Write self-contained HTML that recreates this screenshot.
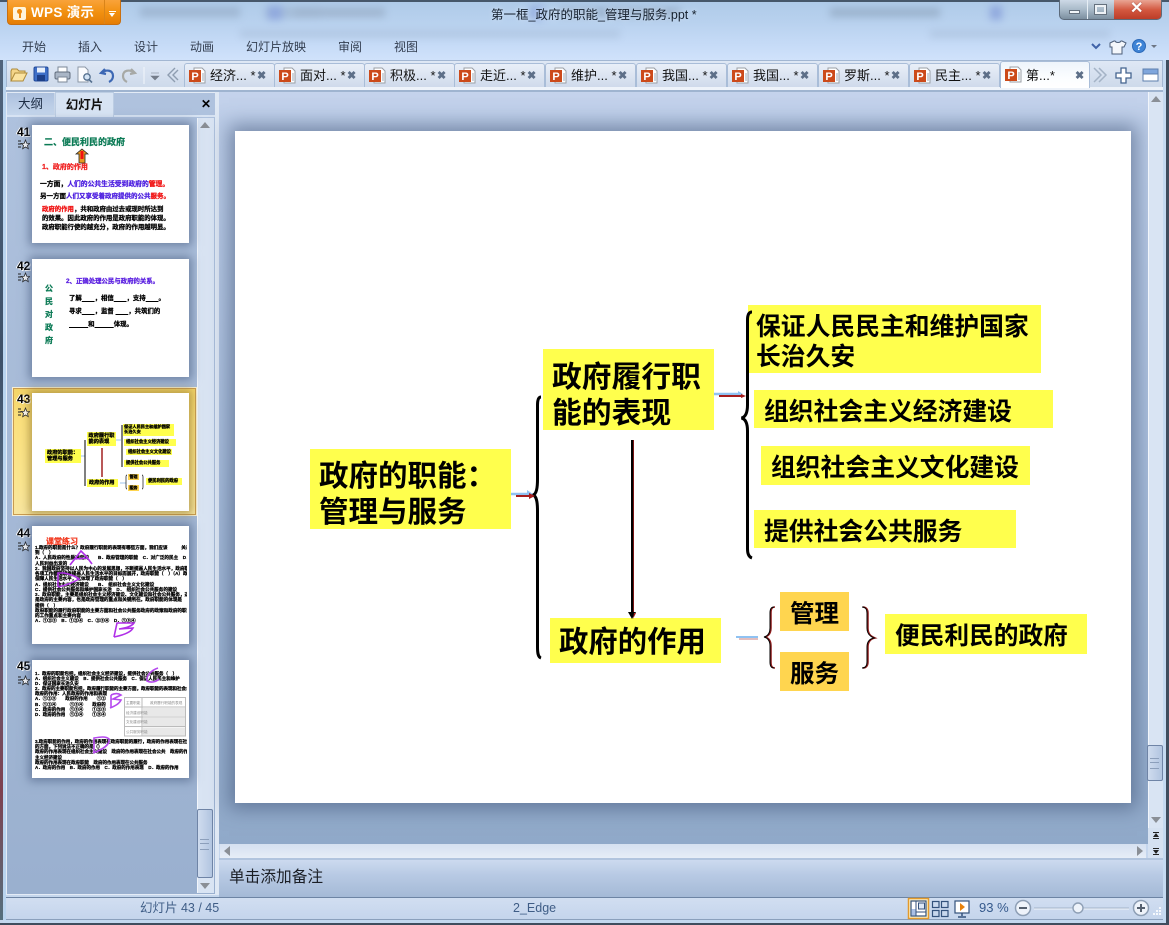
<!DOCTYPE html>
<html lang="zh"><head><meta charset="utf-8"><title>第一框_政府的职能_管理与服务.ppt</title>
<style>
html,body{margin:0;padding:0;width:1169px;height:925px;overflow:hidden;background:#b9cfe9}
body{position:relative;font-family:"Liberation Sans","Noto Sans CJK SC",sans-serif;color:#111}
div,span,svg{position:absolute;display:block}
.m{top:39px;font-size:12px;line-height:16px;color:#333e50;white-space:nowrap}
.tab{top:63px;width:91px;height:24px;background:linear-gradient(#e9eff8,#cfdaeb);border:1px solid #a9bdd8;border-bottom:0;box-sizing:border-box;border-radius:3px 3px 0 0}
.tab .t{left:25px;top:4px;font-size:13px;line-height:16px;color:#111;white-space:nowrap}
.tab .x{left:72px;top:5px;font-size:11px;line-height:14px;color:#5d6f88;font-weight:bold}
.tab svg{left:4px;top:3px}
.b{background:#ffff4d;font-weight:bold;white-space:nowrap;color:#000;font-family:"Noto Sans CJK SC","Liberation Sans",sans-serif}
.th{left:32px;width:157px;height:118px;background:#fff;box-shadow:0 0 9px 3px rgba(70,90,125,.6);overflow:hidden}
.n{left:17px;font-size:12px;font-weight:bold;line-height:12px;color:#000;text-shadow:1px 1px 0 #fff,-1px 0 0 #fff}
.st{left:18px}
.l{position:absolute;white-space:nowrap;font-weight:bold;font-size:5.2px;line-height:7px;color:#000;-webkit-text-stroke:.25px currentColor;overflow:hidden;max-width:152px}
</style></head><body>

<!-- window glass -->
<div style="left:0;top:0;width:1169px;height:925px;background:linear-gradient(#aecaE8 0,#b8d1ee 22px,#c6dbf7 45px,#d0e2fb 60px,#c4d5ec 100%)"></div>
<div style="left:0;top:0;width:1169px;height:2px;background:#46576a"></div>
<div style="left:130px;top:4px;width:930px;height:20px;filter:blur(4px);opacity:.4;overflow:hidden">
  <div style="left:10px;top:3px;width:100px;height:10px;background:#7f93ad"></div>
  <div style="left:135px;top:3px;width:55px;height:11px;background:#8da2bb"></div>
  <div style="left:138px;top:2px;width:14px;height:14px;background:#5a70c8"></div>
  <div style="left:165px;top:4px;width:90px;height:9px;background:#7f8fa5"></div>
  <div style="left:400px;top:2px;width:14px;height:14px;background:#6a80d0"></div>
  <div style="left:430px;top:4px;width:120px;height:9px;background:#75889f"></div>
  <div style="left:700px;top:4px;width:110px;height:9px;background:#75889f"></div>
  <div style="left:860px;top:2px;width:12px;height:14px;background:#5a70c8"></div>
</div>
<div style="left:240px;top:29px;width:880px;height:12px;filter:blur(4px);opacity:.16;overflow:hidden">
  <div style="left:0;top:1px;width:380px;height:8px;background:#6d8099"></div>
  <div style="left:690px;top:1px;width:180px;height:8px;background:#6d8099"></div>
</div>

<!-- WPS button -->
<div style="left:7px;top:0;width:114px;height:25px;background:linear-gradient(#f9a33a,#f29111 50%,#e57d05);border:1px solid #c96f10;border-top:0;box-sizing:border-box;border-radius:0 0 4px 4px"></div>
<div style="left:104px;top:0;width:1px;height:24px;background:#d98419"></div>
<div style="left:13px;top:7px;width:13px;height:13px;background:#fff4dc;border-radius:2px"></div>
<div style="left:17px;top:9px;width:5px;height:5px;border-radius:50%;background:#ee8b10"></div>
<div style="left:19px;top:13px;width:2px;height:5px;background:#ee8b10"></div>
<div style="left:31px;top:4px;font-size:13.500px;line-height:18px;color:#fff;font-weight:bold;white-space:nowrap;letter-spacing:.3px">WPS 演示</div>
<div style="left:109px;top:11px;width:7px;height:1px;background:#fff"></div>
<div style="left:109px;top:13px;width:0;height:0;border:3.5px solid transparent;border-top:4px solid #fff;border-bottom:0"></div>

<div style="left:491px;top:7px;font-size:12.5px;line-height:17px;color:#15202e;white-space:nowrap;text-shadow:0 0 5px #dbe8f8">第一框_政府的职能_管理与服务.ppt *</div>

<!-- window buttons -->
<div style="left:1059px;top:0;width:103px;height:20px;border:1px solid #5c6a7a;border-top:0;box-sizing:border-box;border-radius:0 0 5px 5px;background:linear-gradient(#cdd9e6,#a9bac9 50%,#7c8f9f);overflow:hidden">
  <div style="left:27px;top:0;width:1px;height:20px;background:#e6eef5"></div>
  <div style="left:54px;top:0;width:48px;height:20px;background:linear-gradient(#e9a594,#d3573f 50%,#b93a25)"></div>
  <div style="left:9px;top:10px;width:11px;height:4px;background:#f2f5f8;border:1px solid #65717e;box-sizing:border-box"></div>
  <div style="left:35px;top:5px;width:11px;height:9px;background:transparent;border:2px solid #eef2f6;outline:1px solid #65717e;box-sizing:border-box"></div>
  <div style="left:70px;top:0;font-size:16px;line-height:18px;font-weight:bold;color:#fff;text-shadow:0 0 1px #722">✕</div>
</div>

<!-- menu -->
<div class="m" style="left:22px">开始</div>
<div class="m" style="left:78px">插入</div>
<div class="m" style="left:134px">设计</div>
<div class="m" style="left:190px">动画</div>
<div class="m" style="left:246px">幻灯片放映</div>
<div class="m" style="left:338px">审阅</div>
<div class="m" style="left:394px">视图</div>

<svg style="left:1088px;top:38px" width="80" height="18" viewBox="0 0 80 18">
  <path d="M4 6l4 4 4-4" fill="none" stroke="#3f62a8" stroke-width="2"/>
  <path d="M22 5l4-2h1c1 2 5 2 6 0h1l4 2-2 4h-2v7H24V9h-2z" fill="#f4f7fb" stroke="#4b5d78"/>
  <circle cx="51" cy="8" r="6.5" fill="#3f84d6" stroke="#2b69b8"/>
  <text x="51" y="12" font-size="11" font-weight="bold" text-anchor="middle" fill="#fff">?</text>
  <path d="M63 7h6l-3 3z" fill="#6d7684"/>
</svg>

<!-- toolbar -->
<div style="left:6px;top:60px;width:1157px;height:28px;background:linear-gradient(#dfe8f5,#cdd9ea);border:1px solid #a3b7d2;border-bottom:0;box-sizing:border-box"></div>
<div style="left:6px;top:87px;width:1157px;height:3px;background:#eef3fa"></div>
<div style="left:6px;top:90px;width:1157px;height:2px;background:#9fb4d0"></div>

<svg style="left:9px;top:65px" width="170" height="20" viewBox="0 0 170 20">
  <path d="M2 16V6l1-2h5l2 2h6v3" fill="#f4d589" stroke="#ad8a3a"/>
  <path d="M2 16l4-8h12l-4 8z" fill="#fbe3a0" stroke="#ad8a3a"/>
  <rect x="25" y="2" width="14" height="14" rx="1.5" fill="#3e6fc8" stroke="#224a99"/>
  <rect x="28" y="2.5" width="8" height="5" fill="#e8f0fb"/><rect x="28" y="10" width="8" height="6" fill="#1d3f88"/>
  <rect x="49" y="2" width="9" height="5" fill="#fff" stroke="#7b8797"/>
  <rect x="46" y="7" width="15" height="7" rx="1.5" fill="#aab6c6" stroke="#616d7d"/>
  <rect x="49" y="12" width="9" height="5" fill="#fff" stroke="#7b8797"/>
  <path d="M69 2h7l3 3v12H69z" fill="#fbfcfe" stroke="#8c97a6"/>
  <circle cx="78" cy="12" r="3.2" fill="#d4e4f5" stroke="#55708f" stroke-width="1.3"/>
  <path d="M80 14.5l3 3" stroke="#55708f" stroke-width="1.6"/>
  <path d="M96 4l-4 4 5 1M93 8c4-4 11-3 11 3 0 3-2 5-4 6" fill="none" stroke="#3d68b4" stroke-width="2.2"/>
  <path d="M122 4l4 4-5 1M125 8c-4-4-11-3-11 3 0 3 2 5 4 6" fill="none" stroke="#a7a9a6" stroke-width="2.2"/>
  <path d="M135 2v17" stroke="#f2f6fb"/>
  <path d="M142 8h8M142 11h8l-4 4z" fill="#747d8a" stroke="#747d8a" stroke-width=".6"/>
  <path d="M166 3l-7 7 7 7M169 5l-5 5 5 5" fill="none" stroke="#8e9db0" stroke-width="1.4"/>
</svg>

<!-- doc tabs -->
<div class="tab" style="left:184px"><svg width="17" height="17" viewBox="0 0 17 17"><path d="M5 1h8l3 3v12H5z" fill="#fff" stroke="#9a9fa6"/><path d="M13 7h2M13 9h2M13 11h2M13 13h2" stroke="#9ba8b8"/><rect x="0" y="3" width="12" height="12" fill="#cc4a1a"/><text x="6" y="13" font-size="11" font-weight="bold" text-anchor="middle" fill="#fff">P</text></svg><span class="t">经济... *</span><span class="x">✖</span></div>
<div class="tab" style="left:274px"><svg width="17" height="17" viewBox="0 0 17 17"><path d="M5 1h8l3 3v12H5z" fill="#fff" stroke="#9a9fa6"/><path d="M13 7h2M13 9h2M13 11h2M13 13h2" stroke="#9ba8b8"/><rect x="0" y="3" width="12" height="12" fill="#cc4a1a"/><text x="6" y="13" font-size="11" font-weight="bold" text-anchor="middle" fill="#fff">P</text></svg><span class="t">面对... *</span><span class="x">✖</span></div>
<div class="tab" style="left:364px"><svg width="17" height="17" viewBox="0 0 17 17"><path d="M5 1h8l3 3v12H5z" fill="#fff" stroke="#9a9fa6"/><path d="M13 7h2M13 9h2M13 11h2M13 13h2" stroke="#9ba8b8"/><rect x="0" y="3" width="12" height="12" fill="#cc4a1a"/><text x="6" y="13" font-size="11" font-weight="bold" text-anchor="middle" fill="#fff">P</text></svg><span class="t">积极... *</span><span class="x">✖</span></div>
<div class="tab" style="left:454px"><svg width="17" height="17" viewBox="0 0 17 17"><path d="M5 1h8l3 3v12H5z" fill="#fff" stroke="#9a9fa6"/><path d="M13 7h2M13 9h2M13 11h2M13 13h2" stroke="#9ba8b8"/><rect x="0" y="3" width="12" height="12" fill="#cc4a1a"/><text x="6" y="13" font-size="11" font-weight="bold" text-anchor="middle" fill="#fff">P</text></svg><span class="t">走近... *</span><span class="x">✖</span></div>
<div class="tab" style="left:545px"><svg width="17" height="17" viewBox="0 0 17 17"><path d="M5 1h8l3 3v12H5z" fill="#fff" stroke="#9a9fa6"/><path d="M13 7h2M13 9h2M13 11h2M13 13h2" stroke="#9ba8b8"/><rect x="0" y="3" width="12" height="12" fill="#cc4a1a"/><text x="6" y="13" font-size="11" font-weight="bold" text-anchor="middle" fill="#fff">P</text></svg><span class="t">维护... *</span><span class="x">✖</span></div>
<div class="tab" style="left:636px"><svg width="17" height="17" viewBox="0 0 17 17"><path d="M5 1h8l3 3v12H5z" fill="#fff" stroke="#9a9fa6"/><path d="M13 7h2M13 9h2M13 11h2M13 13h2" stroke="#9ba8b8"/><rect x="0" y="3" width="12" height="12" fill="#cc4a1a"/><text x="6" y="13" font-size="11" font-weight="bold" text-anchor="middle" fill="#fff">P</text></svg><span class="t">我国... *</span><span class="x">✖</span></div>
<div class="tab" style="left:727px"><svg width="17" height="17" viewBox="0 0 17 17"><path d="M5 1h8l3 3v12H5z" fill="#fff" stroke="#9a9fa6"/><path d="M13 7h2M13 9h2M13 11h2M13 13h2" stroke="#9ba8b8"/><rect x="0" y="3" width="12" height="12" fill="#cc4a1a"/><text x="6" y="13" font-size="11" font-weight="bold" text-anchor="middle" fill="#fff">P</text></svg><span class="t">我国... *</span><span class="x">✖</span></div>
<div class="tab" style="left:818px"><svg width="17" height="17" viewBox="0 0 17 17"><path d="M5 1h8l3 3v12H5z" fill="#fff" stroke="#9a9fa6"/><path d="M13 7h2M13 9h2M13 11h2M13 13h2" stroke="#9ba8b8"/><rect x="0" y="3" width="12" height="12" fill="#cc4a1a"/><text x="6" y="13" font-size="11" font-weight="bold" text-anchor="middle" fill="#fff">P</text></svg><span class="t">罗斯... *</span><span class="x">✖</span></div>
<div class="tab" style="left:909px"><svg width="17" height="17" viewBox="0 0 17 17"><path d="M5 1h8l3 3v12H5z" fill="#fff" stroke="#9a9fa6"/><path d="M13 7h2M13 9h2M13 11h2M13 13h2" stroke="#9ba8b8"/><rect x="0" y="3" width="12" height="12" fill="#cc4a1a"/><text x="6" y="13" font-size="11" font-weight="bold" text-anchor="middle" fill="#fff">P</text></svg><span class="t">民主... *</span><span class="x">✖</span></div>
<div class="tab" style="left:1000px;top:61px;height:27px;width:90px;background:linear-gradient(#eef4fb,#fbfdff 60%,#fff);z-index:2"><svg style="top:4px" width="17" height="17" viewBox="0 0 17 17"><path d="M5 1h8l3 3v12H5z" fill="#fff" stroke="#9a9fa6"/><path d="M13 7h2M13 9h2M13 11h2M13 13h2" stroke="#9ba8b8"/><rect x="0" y="3" width="12" height="12" fill="#cc4a1a"/><text x="6" y="13" font-size="11" font-weight="bold" text-anchor="middle" fill="#fff">P</text></svg><span class="t" style="top:6px;left:25px">第...*</span><span class="x" style="top:7px;left:74px">✖</span></div>

<svg style="left:1092px;top:65px" width="70" height="20" viewBox="0 0 70 20">
  <path d="M2 3l7 7-7 7M7 3l7 7-7 7" fill="none" stroke="#a4b3c6" stroke-width="1.5"/>
  <path d="M29 3h5v5h5v5h-5v5h-5v-5h-5V8h5z" fill="#fff" stroke="#44648f" stroke-width="1.3"/>
  <rect x="51" y="4" width="15" height="5" fill="#7fa6dc" stroke="#5d7fae"/><rect x="51" y="9" width="15" height="7" fill="#fff" stroke="#5d7fae"/>
</svg>

<!-- left frame strip (desktop behind) -->
<div style="left:0;top:60px;width:3px;height:860px;background:linear-gradient(#50647c,#3e5169 35%,#5a6f8a 55%,#6a5a70 70%,#7e4150 85%,#55707e)"></div>
<div style="left:3px;top:60px;width:3px;height:860px;background:#b9d4ef"></div>

<!-- left panel -->
<div style="left:6px;top:92px;width:210px;height:803px;background:linear-gradient(#afc2de,#a5b9d6 50%,#9ab0cf);border:1px solid #e3ebf6;box-sizing:border-box"></div>
<div style="left:7px;top:93px;width:48px;height:22px;background:linear-gradient(#adc1de,#c5d6ec);border-right:1px solid #c9d6e8;box-sizing:border-box;font-size:12.5px;line-height:22px;text-align:center;color:#1c2c44">大纲</div>
<div style="left:55px;top:92px;width:59px;height:25px;background:#d7e3f3;border:1px solid #bccde3;border-bottom:0;box-sizing:border-box;font-size:12.5px;line-height:24px;text-align:center;color:#111;font-weight:bold">幻灯片</div>
<div style="left:7px;top:115px;width:48px;height:2px;background:#d7e3f3"></div>
<div style="left:114px;top:115px;width:101px;height:2px;background:#d7e3f3"></div>
<div style="left:201px;top:96px;font-size:12px;line-height:16px;font-weight:bold;color:#000">✕</div>

<!-- left scrollbar -->
<div style="left:197px;top:118px;width:17px;height:775px;background:#d9e4f3;border-left:1px solid #f1f5fb;box-sizing:border-box"></div>
<div style="left:200px;top:122px;width:0;height:0;border:5px solid transparent;border-bottom:6px solid #8a8f96;border-top:0"></div>
<div style="left:197px;top:809px;width:16px;height:69px;background:linear-gradient(90deg,#cfdcef,#b2c5e0);border:1px solid #6f84a6;box-sizing:border-box;border-radius:2px"></div>
<div style="left:200px;top:839px;width:9px;height:9px;border-top:1px solid #8c9fbb;border-bottom:1px solid #8c9fbb"></div>
<div style="left:200px;top:843px;width:9px;height:1px;background:#8c9fbb"></div>
<div style="left:200px;top:883px;width:0;height:0;border:5px solid transparent;border-top:6px solid #8a8f96;border-bottom:0"></div>

<!-- selected thumb highlight -->
<div style="left:13px;top:388px;width:183px;height:127px;background:linear-gradient(#f4d568,#fbe07d 25%,#fbe690 75%,#f8e6a0);border:1px solid #c99b50;outline:1px solid #f6efd2;box-sizing:border-box"></div>

<div class="n" style="top:126px">41</div>
<svg class="st" style="top:139px" width="12" height="12" viewBox="0 0 12 12"><path d="M0 2h3M0 5h3M0 8h3" stroke="#222"/><path d="M7.500 1l1.300 3.300 3 .2-2.300 2 .8 3.200-2.800-1.700-2.800 1.700.8-3.200-2.300-2 3-.2z" fill="#fff" stroke="#222" stroke-width=".8"/></svg>
<div class="n" style="top:260px">42</div>
<svg class="st" style="top:272px" width="12" height="12" viewBox="0 0 12 12"><path d="M0 2h3M0 5h3M0 8h3" stroke="#222"/><path d="M7.500 1l1.300 3.300 3 .2-2.300 2 .8 3.200-2.800-1.700-2.800 1.700.8-3.200-2.300-2 3-.2z" fill="#fff" stroke="#222" stroke-width=".8"/></svg>
<div class="n" style="top:393px">43</div>
<svg class="st" style="top:407px" width="12" height="12" viewBox="0 0 12 12"><path d="M0 2h3M0 5h3M0 8h3" stroke="#222"/><path d="M7.500 1l1.300 3.300 3 .2-2.300 2 .8 3.200-2.800-1.700-2.800 1.700.8-3.200-2.300-2 3-.2z" fill="#fff" stroke="#222" stroke-width=".8"/></svg>
<div class="n" style="top:527px">44</div>
<svg class="st" style="top:541px" width="12" height="12" viewBox="0 0 12 12"><path d="M0 2h3M0 5h3M0 8h3" stroke="#222"/><path d="M7.500 1l1.300 3.300 3 .2-2.300 2 .8 3.200-2.800-1.700-2.800 1.700.8-3.200-2.300-2 3-.2z" fill="#fff" stroke="#222" stroke-width=".8"/></svg>
<div class="n" style="top:660px">45</div>
<svg class="st" style="top:675px" width="12" height="12" viewBox="0 0 12 12"><path d="M0 2h3M0 5h3M0 8h3" stroke="#222"/><path d="M7.500 1l1.300 3.300 3 .2-2.300 2 .8 3.200-2.800-1.700-2.800 1.700.8-3.200-2.300-2 3-.2z" fill="#fff" stroke="#222" stroke-width=".8"/></svg>

<!-- thumb 41 -->
<div class="th" style="top:125px">
  <div class="l" style="left:12px;top:12px;font-size:9px;line-height:11px;color:#0b7a55">二、便民利民的政府</div>
  <svg style="left:43px;top:23px" width="14" height="16" viewBox="0 0 14 16"><path d="M7 1l6 5h-3v9H4V6H1z" fill="#e89a20" stroke="#222" stroke-width=".8"/><path d="M7 3v8" stroke="#f01010" stroke-width="3"/></svg>
  <div class="l" style="left:10px;top:38px;font-size:7px;line-height:9px;color:#f02020">1、政府的作用</div>
  <div class="l" style="left:8px;top:55px;font-size:6.8px;line-height:9px">一方面，<span style="position:static;display:inline;color:#4d1fe0">人们的公共生活受到政府的</span><span style="position:static;display:inline;color:#f01010">管理。</span></div>
  <div class="l" style="left:8px;top:67px;font-size:6.5px;line-height:9px">另一方面<span style="position:static;display:inline;color:#4d1fe0">人们又享受着政府提供的公共</span><span style="position:static;display:inline;color:#f01010">服务。</span></div>
  <div class="l" style="left:10px;top:80px;font-size:6.4px;line-height:9px"><span style="position:static;display:inline;color:#f01010">政府的作用</span>，共和政府由过去或现时所达到<br>的效果。因此政府的作用是政府职能的体现。<br>政府职能行使的越充分，政府的作用越明显。</div>
</div>

<!-- thumb 42 -->
<div class="th" style="top:259px">
  <div class="l" style="left:34px;top:18px;font-size:6.4px;line-height:9px;color:#5a1fe0">2、正确处理公民与政府的关系。</div>
  <div class="l" style="left:13px;top:23px;font-size:8px;line-height:13px;color:#0b7a55;white-space:normal;width:9px">公<br>民<br>对<br>政<br>府</div>
  <div class="l" style="left:37px;top:33px;font-size:6.4px;line-height:13px">了解<u style="font-weight:normal">　　</u>，相信<u style="font-weight:normal">　　</u>，支持<u style="font-weight:normal">　　</u>。<br>寻求<u style="font-weight:normal">　　</u>，监督 <u style="font-weight:normal">　　</u>，共筑们的<br><u style="font-weight:normal">　　　</u>和<u style="font-weight:normal">　　　</u>体现。</div>
</div>

<!-- thumb 43 -->
<div class="th" style="top:393px;box-shadow:0 0 8px 3px rgba(150,125,50,.65)">
  <div class="b" style="left:13px;top:56px;width:36px;height:14px;font-size:5.2px;line-height:6.3px;padding:1px 0 0 2px;box-sizing:border-box;-webkit-text-stroke:.3px #000">政府的职能：<br>管理与服务</div>
  <div class="b" style="left:55px;top:39px;width:29px;height:14px;font-size:5.2px;line-height:6.3px;padding:1px 0 0 1.5px;box-sizing:border-box;-webkit-text-stroke:.3px #000">政府履行职<br>能的表现</div>
  <div class="b" style="left:55px;top:86px;width:31px;height:8px;font-size:5.1px;line-height:8px;padding-left:2px;box-sizing:border-box;-webkit-text-stroke:.3px #000">政府的作用</div>
  <div class="b" style="left:91px;top:31px;width:51px;height:12px;font-size:4.2px;line-height:5.3px;padding:.5px 0 0 1px;box-sizing:border-box;-webkit-text-stroke:.3px #000">保证人民民主和维护国家<br>长治久安</div>
  <div class="b" style="left:92px;top:46px;width:52px;height:7px;font-size:4.3px;line-height:7px;padding-left:2px;box-sizing:border-box;-webkit-text-stroke:.3px #000">组织社会主义经济建设</div>
  <div class="b" style="left:94px;top:56px;width:46px;height:6px;font-size:4.3px;line-height:6px;padding-left:2px;box-sizing:border-box;-webkit-text-stroke:.3px #000">组织社会主义文化建设</div>
  <div class="b" style="left:92px;top:67px;width:45px;height:7px;font-size:4.3px;line-height:7px;padding-left:2px;box-sizing:border-box;-webkit-text-stroke:.3px #000">提供社会公共服务</div>
  <div class="b" style="left:96px;top:81px;width:11px;height:6px;background:#ffd54f;font-size:4px;line-height:6px;padding-left:1.500px;box-sizing:border-box;-webkit-text-stroke:.3px #000">管理</div>
  <div class="b" style="left:96px;top:92px;width:11px;height:6px;background:#ffd54f;font-size:4px;line-height:6px;padding-left:1.500px;box-sizing:border-box;-webkit-text-stroke:.3px #000">服务</div>
  <div class="b" style="left:114px;top:85px;width:36px;height:7px;font-size:4.3px;line-height:7px;padding-left:2px;box-sizing:border-box;-webkit-text-stroke:.3px #000">便民利民的政府</div>
  <svg style="left:0;top:0" width="157" height="118" viewBox="0 0 157 118">
    <path d="M49 63h4" stroke="#9cc3ee" stroke-width="1"/>
    <path d="M53 47v46M90 32v42" stroke="#000" stroke-width="1"/>
    <path d="M70 55v29" stroke="#9b1010" stroke-width="1.400"/>
    <path d="M84 47h5M88 90h6" stroke="#9cc3ee" stroke-width="1"/>
    <path d="M95 82q-1 0-1 2v10q0 2 1 2M110 82q1 0 1 2v10q0 2-1 2" fill="none" stroke="#111" stroke-width=".7"/>
  </svg>
</div>

<!-- thumb 44 -->
<div class="th" style="top:526px">
  <div class="l" style="left:14px;top:11px;font-size:8px;line-height:10px;color:#f23a20">课堂练习</div>
  <div class="l" style="left:3px;top:19px;line-height:5.240px;font-size:4.600px">1.政府的职能是什么？政府履行职能的表现有哪些方面，我们应该　　　关系<br>到（　）<br>A．人民政府的性质决定的　　B．政府管理的职能　C．对广泛的民主　D．从<br>人民利益出发的<br>2．我国政府坚持以人民为中心的发展思想，不断提高人民生活水平，政府职<br>各项工作都围绕着提高人民生活水平的目标而展开，政府职能（　）（A）政府<br>保障人民生活水平，这体现了政府职能（　）<br>A．组织社会主义经济建设　　B．　组织社会主义文化建设<br>C．提供社会公共服务和维护国家长治　D．　组织社会公共服务的建设<br>3．政府职能，主要是组织社会主义经济建设、文化建设和社会公共服务，这些<br>是政府的主要内容，也是政府管理的重点和关键所在。政府职能的体现是<br>提供（　）<br>政府职能的履行政府职能的主要方面和社会公共服务政府的政策和政府的职能<br>的工作重点和主要内容<br>A．①②③　B．①②④　C．②③④　D．①③④</div>
  <svg style="left:0;top:0" width="157" height="118" viewBox="0 0 157 118">
    <g fill="none" stroke-width="1.600" stroke="#b030e8"><path d="M38 39L49 25l5 5 6 8M42 33l14-1"/><path d="M26 61V47l6 0c5 1 11 3 15 6-5 3-12 6-21 8"/><path d="M82 111l3-14h17c-2 3-8 5-15 6l14-1c-2 4-9 7-19 9"/></g>
  </svg>
</div>

<!-- thumb 45 -->
<div class="th" style="top:660px">
  <div class="l" style="left:3px;top:11px;line-height:5.200px;font-size:4.500px">1．政府的职能包括，组织社会主义经济建设，提供社会公共服务（　）<br>A．组织社会主义建设　B．提供社会公共服务　C．保证人民民主和维护<br>D．保证国家长治久安</div>
  <div class="l" style="left:3px;top:26px;line-height:5.200px;font-size:4.500px">2．政府的主要职能包括，政府履行职能的主要方面，政府职能的表现和社会公共<br>政府的作用：人民政府的作用和表现<br>A．①②③　　政府的作用　　①②<br>B．①②④　　　①③④　　政府的<br>C．政府的作用　①③④　　①②③<br>D．政府的作用　①②④　　①③④</div>
  <div class="l" style="left:3px;top:79px;line-height:5.200px;font-size:4.500px">3.政府职能的作用，政府的作用表现在政府职能的履行，政府的作用表现在社会<br>的方面，下列说法不正确的是（）<br>政府的作用表现在组织社会主义建设　政府的作用表现在社会公共　政府的作用<br>主义经济建设<br>政府的作用表现在政府职能　政府的作用表现在公共服务<br>A．政府的作用　B．政府的作用　C．政府的作用表现　D．政府的作用</div>
  <svg style="left:0;top:0" width="157" height="118" viewBox="0 0 157 118">
    <rect x="92" y="37" width="62" height="39" fill="#fff"/>
    <g fill="#e8e8e8"><rect x="111" y="48" width="42" height="8"/><rect x="111" y="58" width="42" height="8"/><rect x="111" y="67.500" width="42" height="8"/></g>
    <g stroke="#bbb" stroke-width="1" fill="none"><rect x="92.500" y="37.500" width="61" height="38.500"/><path d="M93 47h61M93 57h61M93 66.500h61M110 37v39"/></g>
    <g fill="#888" font-size="3.600" font-family="Noto Sans CJK SC"><text x="94" y="44">主要职能</text><text x="118" y="44">政府履行职能的表现</text><text x="94" y="54">经济建设职能</text><text x="94" y="63">文化建设职能</text><text x="94" y="73">公共服务职能</text></g>
    <g fill="none" stroke="#b548ee" stroke-width="1.600"><path d="M126 8c-6 2-12 7-11 13 4 2 9 1 12-2"/><path d="M79 35v13M79 35c4-2 7-2 10 0l-8 4 8 1c-2 4-6 6-11 8"/><path d="M62 93V78c6-1 12-2 15 1 1 5-5 10-16 14"/></g>
  </svg>
</div>

<!-- main area -->
<div style="left:219px;top:92px;width:929px;height:752px;background:linear-gradient(#c5d3ec 0,#bccde8 30px,#a8bddb 50%,#90a9c9 100%)"></div>
<div style="left:215px;top:92px;width:4px;height:803px;background:#dfe8f4"></div>

<!-- slide -->
<div style="left:235px;top:131px;width:896px;height:672px;background:#fff;box-shadow:0 0 18px 6px rgba(60,80,115,.55)"></div>

<!-- diagram -->
<div class="b" style="left:310px;top:449px;width:201px;height:80px;font-size:29.500px;line-height:36px;padding:7px 0 0 9px;box-sizing:border-box">政府的职能：<br>管理与服务</div>
<div class="b" style="left:543px;top:349px;width:171px;height:81px;font-size:29.800px;line-height:36px;padding:7px 0 0 9px;box-sizing:border-box">政府履行职<br>能的表现</div>
<div class="b" style="left:550px;top:618px;width:171px;height:45px;font-size:29.400px;line-height:45px;padding:0 0 0 9px;box-sizing:border-box">政府的作用</div>
<div class="b" style="left:748px;top:305px;width:293px;height:68px;font-size:24.800px;line-height:30px;padding:5px 0 0 8px;box-sizing:border-box">保证人民民主和维护国家<br>长治久安</div>
<div class="b" style="left:754px;top:390px;width:299px;height:38px;font-size:24.800px;line-height:41px;padding:0 0 0 10px;box-sizing:border-box">组织社会主义经济建设</div>
<div class="b" style="left:761px;top:446px;width:269px;height:39px;font-size:24.800px;line-height:41px;padding:0 0 0 10px;box-sizing:border-box">组织社会主义文化建设</div>
<div class="b" style="left:754px;top:510px;width:262px;height:38px;font-size:24.800px;line-height:40px;padding:0 0 0 10px;box-sizing:border-box">提供社会公共服务</div>
<div class="b" style="left:780px;top:592px;width:69px;height:39px;background:#ffd54f;font-size:24.500px;line-height:41px;padding:0 0 0 10px;box-sizing:border-box">管理</div>
<div class="b" style="left:780px;top:652px;width:69px;height:39px;background:#ffd54f;font-size:24.500px;line-height:41px;padding:0 0 0 10px;box-sizing:border-box">服务</div>
<div class="b" style="left:885px;top:614px;width:202px;height:40px;font-size:24.700px;line-height:41px;padding:0 0 0 10px;box-sizing:border-box">便民利民的政府</div>

<svg style="left:0;top:0" width="1169" height="925" viewBox="0 0 1169 925">
  <g fill="none" stroke="#000" stroke-width="3">
    <path d="M541 397c-3 0-3.500 4-3.500 8v74c0 9-1 15-4.500 16 3.500 1 4.500 7 4.500 16v136c0 6 .5 10 3.500 11"/>
    <path d="M752 312c-3 0-4.500 3-4.500 8v85c0 7-2 12-6 13 4 1 6 6 6 13v118c0 5 1.500 8 4.500 9"/>
  </g>
  <g fill="none" stroke="#8f1c1c" stroke-width="1.500" transform="translate(1 0)">
    <path d="M774 607c-3 0-4 2-4 6v15c0 5-2 8-6 9 4 1 6 4 6 9v16c0 4 1 6 4 6"/>
    <path d="M862 607c3 0 5 2 5 6v15c0 5 2 8 7 10-5 1-7 4-7 9v15c0 4-2 6-5 6"/>
  </g>
  <g fill="none" stroke="#000" stroke-width="1">
    <path d="M774 607c-3 0-4 2-4 6v15c0 5-2 8-6 9 4 1 6 4 6 9v16c0 4 1 6 4 6"/>
    <path d="M862 607c3 0 5 2 5 6v15c0 5 2 8 7 10-5 1-7 4-7 9v15c0 4-2 6-5 6"/>
  </g>
  <path d="M511 494h19" stroke="#8fc2f2" stroke-width="2.500"/><path d="M527 490l6 4-6 3z" fill="#8fc2f2"/>
  <path d="M516 496h17" stroke="#a51c1c" stroke-width="2"/><path d="M529 493l6 3-6 3z" fill="#a51c1c"/>
  <path d="M714 394h26" stroke="#8fc2f2" stroke-width="2.500"/><path d="M738 391l5 3-5 2z" fill="#8fc2f2"/>
  <path d="M719 396h24" stroke="#a51c1c" stroke-width="2"/><path d="M741 394l5 2-5 2z" fill="#a51c1c"/>
  <path d="M736 637h22" stroke="#8fc2f2" stroke-width="2"/>
  <path d="M739 639h19" stroke="#c77c7c" stroke-width="1"/>
  <path d="M632 440v172" stroke="#000" stroke-width="2"/><path d="M633.500 440v172" stroke="#7a1414" stroke-width="1"/>
  <path d="M628 612h8l-4 7z" fill="#000"/><path d="M634 613h2l-3 6z" fill="#a51c1c"/>
</svg>

<!-- right scrollbar -->
<div style="left:1148px;top:92px;width:16px;height:738px;background:#d9e4f3;border-left:1px solid #f1f5fb;box-sizing:border-box"></div>
<div style="left:1151px;top:96px;width:0;height:0;border:5px solid transparent;border-bottom:6px solid #8a8f96;border-top:0"></div>
<div style="left:1147px;top:745px;width:16px;height:36px;background:linear-gradient(90deg,#cfdcef,#b2c5e0);border:1px solid #6f84a6;box-sizing:border-box;border-radius:2px"></div>
<div style="left:1150px;top:758px;width:9px;height:9px;border-top:1px solid #8c9fbb;border-bottom:1px solid #8c9fbb"></div>
<div style="left:1150px;top:762px;width:9px;height:1px;background:#8c9fbb"></div>
<div style="left:1151px;top:817px;width:0;height:0;border:5px solid transparent;border-top:6px solid #8a8f96;border-bottom:0"></div>
<div style="left:1148px;top:828px;width:16px;height:31px;background:#d5e1f1"></div>
<svg style="left:1150px;top:829px" width="12" height="29" viewBox="0 0 12 29"><path d="M3 3h6v1H3zM6 4l3 4H3zM3 9h6v1H3zM3 19h6v1H3zM3 21h6l-3 4zM3 25h6v1H3z" fill="#222"/></svg>

<!-- h scrollbar -->
<div style="left:220px;top:844px;width:926px;height:14px;background:linear-gradient(#d5e0f0,#e6edf7)"></div>
<div style="left:224px;top:846px;width:0;height:0;border:5px solid transparent;border-right:6px solid #8a8f96;border-left:0"></div>
<div style="left:1137px;top:846px;width:0;height:0;border:5px solid transparent;border-left:6px solid #8a8f96;border-right:0"></div>
<div style="left:219px;top:858px;width:946px;height:2px;background:#b1c4de"></div>

<!-- notes -->
<div style="left:219px;top:860px;width:946px;height:37px;background:linear-gradient(#ccdaef,#b8cae4 40%,#a4b9d6)"></div>
<div style="left:229px;top:868px;font-size:15.700px;line-height:20px;color:#1b1f26;white-space:nowrap">单击添加备注</div>

<!-- status -->
<div style="left:6px;top:897px;width:1159px;height:23px;background:linear-gradient(#d1def1,#c5d5ec);border-top:1px solid #6d84a4;border-bottom:1px solid #8ba0bc;box-sizing:border-box"></div>
<div style="left:140px;top:900px;font-size:12.500px;line-height:16px;color:#3f5d86;white-space:nowrap">幻灯片 43 / 45</div>
<div style="left:513px;top:900px;font-size:12.500px;line-height:16px;color:#3f5d86;white-space:nowrap">2_Edge</div>
<div style="left:979px;top:899px;font-size:13px;line-height:18px;color:#35598c;white-space:nowrap">93 %</div>
<svg style="left:905px;top:897px" width="260" height="24" viewBox="0 0 260 24">
  <rect x="3.500" y="1.500" width="20" height="20" fill="#fdf2c8" stroke="#e39a2c" stroke-width="1.500"/>
  <rect x="6" y="4" width="15" height="15" fill="#fff" stroke="#34527c" stroke-width="1.200"/><path d="M11 4v15M11 15h10" stroke="#34527c"/><rect x="6.500" y="12" width="4" height="6.500" fill="#a9bfe5"/><rect x="13.500" y="6" width="6" height="6" fill="#dce7f6" stroke="#34527c"/>
  <g fill="none" stroke="#34527c" stroke-width="1.200"><rect x="27.500" y="4.500" width="6.500" height="6"/><rect x="36.500" y="4.500" width="6.500" height="6"/><rect x="27.500" y="13.500" width="6.500" height="6"/><rect x="36.500" y="13.500" width="6.500" height="6"/></g>
  <rect x="50" y="4" width="14" height="12" fill="#fff" stroke="#34527c" stroke-width="1.200"/><path d="M55 6v8l5-4z" fill="#e8820c"/><path d="M57 16v3M53 20h8" stroke="#34527c" stroke-width="1.500"/>
  <circle cx="118" cy="11" r="7.500" fill="#eef3fa" stroke="#8e9fb5" stroke-width="1.500"/><path d="M114 11h8" stroke="#55606f" stroke-width="2"/>
  <path d="M129 11h95" stroke="#a3b4ca" stroke-width="1"/><path d="M129 12h95" stroke="#f0f5fb" stroke-width="1"/>
  <circle cx="173" cy="11" r="5" fill="#eef3fa" stroke="#8e9fb5" stroke-width="1.400"/>
  <circle cx="236" cy="11" r="7.500" fill="#eef3fa" stroke="#8e9fb5" stroke-width="1.500"/><path d="M232 11h8M236 7v8" stroke="#55606f" stroke-width="2"/>
  <g fill="#f6f9fd"><rect x="254" y="10" width="2" height="2"/><rect x="251" y="13" width="2" height="2"/><rect x="254" y="13" width="2" height="2"/><rect x="248" y="16" width="2" height="2"/><rect x="251" y="16" width="2" height="2"/><rect x="254" y="16" width="2" height="2"/></g>
</svg>

<!-- right + bottom frame -->
<div style="left:1163px;top:60px;width:3px;height:860px;background:#c5daf1"></div>
<div style="left:1166px;top:60px;width:3px;height:865px;background:#3f4d5e"></div>
<div style="left:3px;top:920px;width:1163px;height:3px;background:#c3d8ef"></div>
<div style="left:0;top:923px;width:1169px;height:2px;background:#3f4d5e"></div>
</body></html>
